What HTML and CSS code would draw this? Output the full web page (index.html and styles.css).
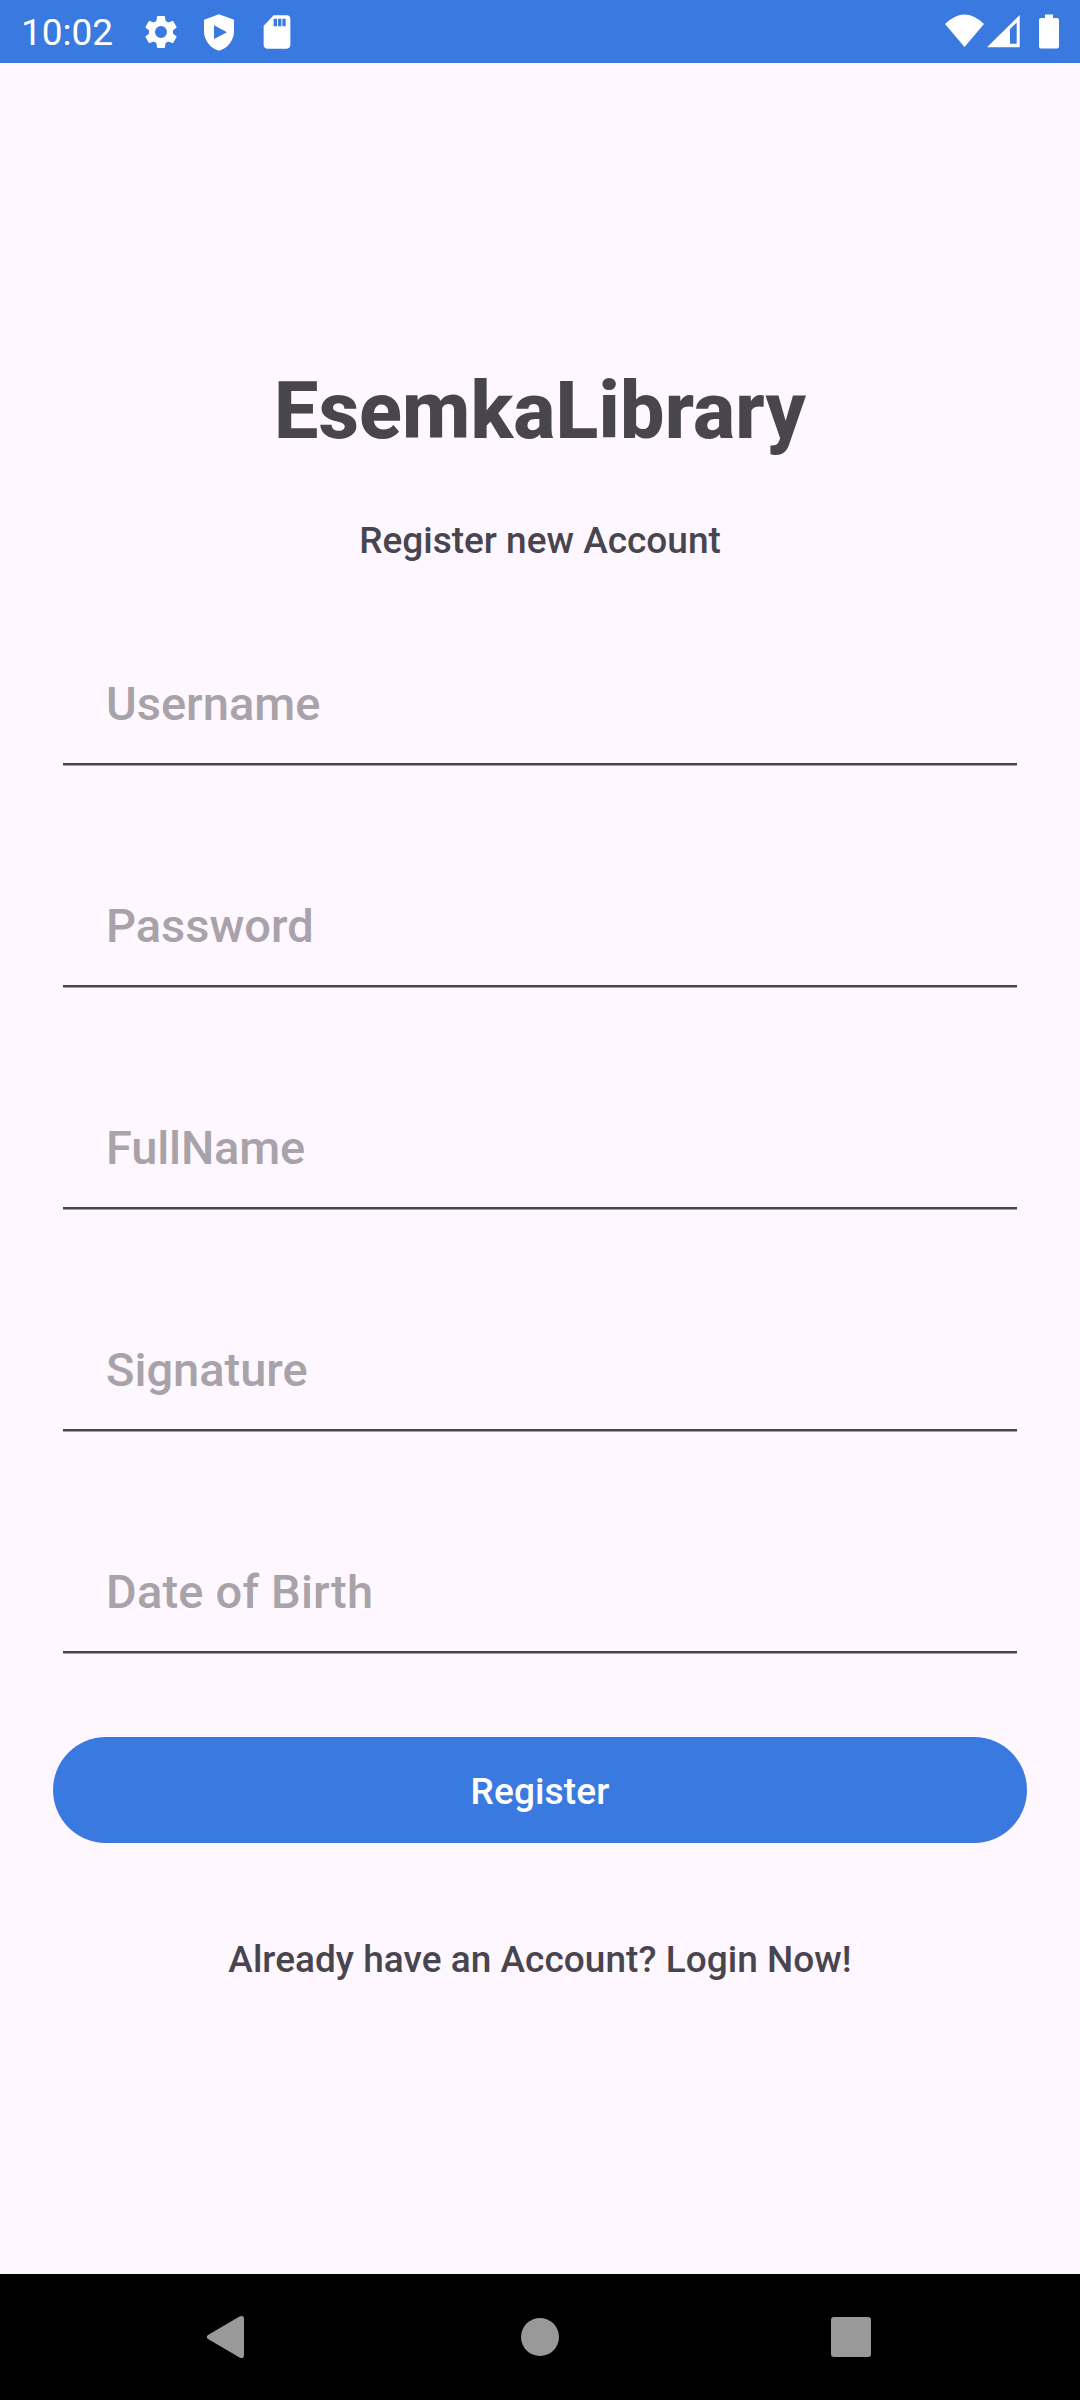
FILE: index.html
```html
<!DOCTYPE html>
<html lang="en">
<head>
<meta charset="utf-8">
<title>EsemkaLibrary</title>
<link rel="stylesheet" href="styles.css">
</head>
<body>
<header class="status">
  <span class="clock">10:02</span>
  <svg class="ic gear" viewBox="0 0 24 24"><path d="M19.14 12.94c.04-.3.06-.61.06-.94s-.02-.64-.07-.94l2.03-1.58a.49.49 0 0 0 .12-.61l-1.92-3.32a.49.49 0 0 0-.59-.22l-2.39.96c-.5-.38-1.03-.7-1.62-.94l-.36-2.54a.48.48 0 0 0-.48-.41h-3.84c-.24 0-.43.17-.47.41l-.36 2.54c-.59.24-1.13.57-1.62.94l-2.39-.96a.48.48 0 0 0-.59.22L2.74 8.87c-.12.21-.08.47.12.61l2.03 1.58c-.05.3-.09.63-.09.94s.02.64.07.94l-2.03 1.58a.49.49 0 0 0-.12.61l1.92 3.32c.12.22.37.29.59.22l2.39-.96c.5.38 1.03.7 1.62.94l.36 2.54c.05.24.24.41.48.41h3.84c.24 0 .44-.17.47-.41l.36-2.54c.59-.24 1.13-.56 1.62-.94l2.39.96c.22.08.47 0 .59-.22l1.92-3.32a.48.48 0 0 0-.12-.61zM12 15.6a3.6 3.6 0 1 1 0-7.2 3.6 3.6 0 0 1 0 7.2z"/></svg>
  <svg class="ic shield" viewBox="0 0 24 24"><path fill-rule="evenodd" d="M12 1.300 3 4.700v6.800c0 5.550 3.840 10.200 9 11.700 5.160-1.500 9-6.150 9-11.700V4.700zM9 8v8.200l7.800-4.100z"/></svg>
  <svg class="ic sd" viewBox="0 0 24 24"><path fill-rule="evenodd" d="M18 2h-8L4 8.200V20c0 1.100.9 2 2 2h12c1.100 0 2-.9 2-2V4c0-1.100-.9-2-2-2zm-6 6.500h-2V4h2zm2.600 0h-2V4h2zm2.600 0h-2V4h2z"/></svg>
  <svg class="signals" viewBox="0 0 120 40"><path d="M5 12Q24.500-7 44 12L24.500 35z"/><path fill-rule="evenodd" d="M79.700 3v32.200H47zM76.700 10.500v21.300H70V17z"/><path d="M105 2.500h8V6h4q2 0 2 2v26.500q0 2-2 2h-16q-2 0-2-2V8q0-2 2-2h4z"/></svg>
</header>
<main class="form">
  <h1 class="title">EsemkaLibrary</h1>
  <p class="sub">Register new Account</p>
  <div class="field"><span>Username</span></div>
  <div class="field"><span>Password</span></div>
  <div class="field fullname"><span>FullName</span></div>
  <div class="field"><span>Signature</span></div>
  <div class="field birth"><span>Date of Birth</span></div>
  <button class="register">Register</button>
  <p class="login">Already have an Account? Login Now!</p>
</main>
<nav class="nav">
  <svg class="navicons" viewBox="0 0 1080 126"><path d="M208 61 239.500 42.500Q244 40.500 244 45V81Q244 85.500 239.500 83.500L208 65Q205.500 63 208 61z"/><circle cx="540" cy="63" r="19"/><rect x="831" y="43" width="40" height="40" rx="3"/></svg>
</nav>
</body>
</html>
```
FILE: styles.css
```css
* { box-sizing: border-box; }
body { margin: 0; width: 1080px; height: 2400px; display: flex; flex-direction: column; background: #fef7ff; color: #49454f; font-family: Roboto, sans-serif; font-weight: 500; }
svg { display: block; fill: #fff; }
.status { height: 63px; background: #3a7ae0; color: #fff; display: flex; align-items: center; padding: 0 20px 0 21px; }
.clock { width: 120px; font-size: 37px; font-weight: 400; line-height: 60px; padding-top: 3px; white-space: nowrap; }
.ic { width: 40px; height: 40px; margin-right: 18px; }
.signals { width: 120px; height: 40px; margin-left: auto; }
.form { flex: 1; display: flex; flex-direction: column; padding: 302px 53px 0; }
.title { margin: 0; text-align: center; font-size: 79px; line-height: 92px; font-weight: 820; letter-spacing: 0.15px; }
.sub { margin: 62px 0 65px; text-align: center; font-size: 37px; line-height: 44px; }
.field { height: 137px; margin: 0 10px 85px; padding: 48px 43px 0; border-bottom: 2px solid #49454f; box-shadow: 0 1px #a39fa7; color: #a8a2a9; font-size: 47px; line-height: 56px; }
.fullname { letter-spacing: -0.15px; }
.birth { margin-bottom: 84px; letter-spacing: 0.2px; }
.register { height: 106px; padding: 4px 0 0; border: 0; border-radius: 53px; background: #3a7ae0; color: #fff; font: 500 37px/44px Roboto, sans-serif; letter-spacing: 0.15px; }
.login { margin: 94px 0 0; text-align: center; font-size: 37px; line-height: 46px; letter-spacing: 0.03px; }
.nav { height: 126px; background: #000; }
.navicons { width: 1080px; height: 126px; fill: #999; }
```
